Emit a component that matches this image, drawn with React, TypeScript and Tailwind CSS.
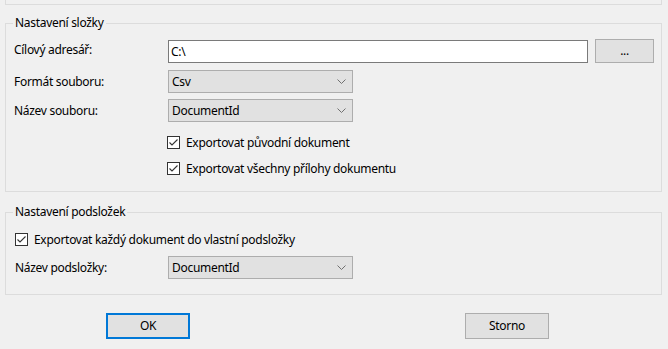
import React from "react";

function Check() {
  return (
    <div className="w-[13px] h-[13px] border border-[#333333] bg-white flex items-center justify-center shrink-0">
      <svg width="11" height="11" viewBox="0 0 11 11">
        <path d="M1.5 5.5 L4 8 L9.5 2.5" fill="none" stroke="#333333" strokeWidth="1.1" />
      </svg>
    </div>
  );
}

function Combo({ value }: { value: string }) {
  return (
    <div className="w-[185px] h-[23px] border border-[#adadad] bg-[#e1e1e1] flex items-center pl-[3px] pr-[6px]">
      <span className="flex-1 leading-none">{value}</span>
      <svg width="9" height="5" viewBox="0 0 9 5">
        <path d="M0.5 0.5 L4.5 4.5 L8.5 0.5" fill="none" stroke="#707070" strokeWidth="1" />
      </svg>
    </div>
  );
}

function CheckRow({ label, className }: { label: string; className?: string }) {
  return (
    <div className={"flex items-center h-[17px] " + (className ?? "")}>
      <Check />
      <span className="ml-[6px] leading-none">{label}</span>
    </div>
  );
}

export default function App() {
  return (
    <div className="w-[668px] h-[349px] bg-[#f0f0f0] text-[12px] tracking-[-0.3px] text-black font-['Segoe_UI','Noto_Sans',sans-serif] flex flex-col overflow-hidden">
      <div className="ml-[5px] w-[657px] h-[5px] border-x border-b border-[#dcdcdc] shrink-0" />

      <div className="relative mt-[18px] ml-[5px] w-[657px] h-[169px] border border-[#dcdcdc] shrink-0 flex flex-col pl-[8px]">
        <span className="absolute left-[7px] top-[-9px] px-[2px] bg-[#f0f0f0] leading-[16px]">Nastavení složky</span>

        <div className="mt-[15px] flex items-end h-[24px]">
          <span className="w-[154px] self-center leading-none mb-[2px]">Cílový adresář:</span>
          <div className="w-[420px] h-[23px] border border-[#7a7a7a] bg-white flex items-center pl-[2px] leading-none">C:\</div>
          <div className="ml-[7px] w-[59px] h-[24px] border border-[#adadad] bg-[#e1e1e1] flex items-center justify-center leading-none">...</div>
        </div>

        <div className="mt-[7px] flex items-center">
          <span className="w-[154px] leading-none">Formát souboru:</span>
          <Combo value="Csv" />
        </div>

        <div className="mt-[6px] flex items-center">
          <span className="w-[154px] leading-none">Název souboru:</span>
          <Combo value="DocumentId" />
        </div>

        <CheckRow className="mt-[12px] ml-[153px]" label="Exportovat původní dokument" />
        <CheckRow className="mt-[9px] ml-[153px]" label="Exportovat všechny přílohy dokumentu" />
      </div>

      <div className="relative mt-[20px] ml-[5px] w-[657px] h-[83px] border border-[#dcdcdc] shrink-0 flex flex-col pl-[9px]">
        <span className="absolute left-[7px] top-[-9px] px-[2px] bg-[#f0f0f0] leading-[16px]">Nastavení podsložek</span>

        <CheckRow className="mt-[18px]" label="Exportovat každý dokument do vlastní podsložky" />

        <div className="mt-[8px] flex items-center">
          <span className="w-[153px] leading-none">Název podsložky:</span>
          <Combo value="DocumentId" />
        </div>
      </div>

      <div className="mt-[18px] ml-[106px] flex shrink-0">
        <div className="w-[84px] h-[26px] border-2 border-[#0078d7] bg-[#e1e1e1] flex items-center justify-center leading-none">OK</div>
        <div className="ml-[275px] w-[84px] h-[26px] border border-[#adadad] bg-[#e1e1e1] flex items-center justify-center leading-none">Storno</div>
      </div>
    </div>
  );
}
